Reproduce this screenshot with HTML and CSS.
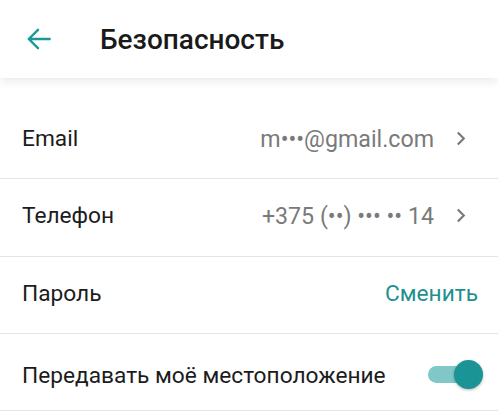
FILE: index.html
```html
<!DOCTYPE html>
<html lang="ru">
<head>
<meta charset="utf-8">
<link rel="stylesheet" href="styles.css">
</head>
<body>
<header class="appbar">
  <span class="back">
    <svg width="34" height="34" viewBox="0 0 24 24"><path d="M19.5 12H4.8M11.3 5.5L4.8 12l6.5 6.5" fill="none" stroke="#1b9898" stroke-width="1.7" stroke-linecap="round" stroke-linejoin="round"/></svg>
  </span>
  <h1 class="title">Безопасность</h1>
</header>
<main class="list">
  <div class="row">
    <span class="label">Email</span>
    <span class="value">m•••@gmail.com</span>
    <svg class="chev" width="10" height="15" viewBox="0 0 10 15"><path d="M1.8 1.5L7.8 7.5 1.8 13.5" fill="none" stroke="#777" stroke-width="2.1"/></svg>
  </div>
  <div class="row">
    <span class="label">Телефон</span>
    <span class="value">+375 (••) ••• •• 14</span>
    <svg class="chev" width="10" height="15" viewBox="0 0 10 15"><path d="M1.8 1.5L7.8 7.5 1.8 13.5" fill="none" stroke="#777" stroke-width="2.1"/></svg>
  </div>
  <div class="row">
    <span class="label">Пароль</span>
    <span class="action">Сменить</span>
  </div>
  <div class="row row-switch">
    <span class="label">Передавать моё местоположение</span>
    <span class="switch"><span class="track"></span><span class="thumb"></span></span>
  </div>
</main>
</body>
</html>
```
FILE: styles.css
```css
* { box-sizing: border-box; }
html, body { margin: 0; padding: 0; background: #fff; }
body { font-family: Roboto, "Noto Sans", sans-serif; color: #1c1c1c; width: 498px; overflow: hidden; }
.appbar {
  height: 78px;
  display: flex;
  align-items: center;
  background: #fff;
  box-shadow: 0 3px 10px rgba(0,0,0,0.09);
  position: relative;
  z-index: 1;
}
.back { width: 34px; height: 34px; margin-left: 22px; display: flex; }
.title { margin: 0 0 0 44px; font-size: 28px; font-weight: 500; color: #1a1a1a; }
.list { padding-top: 24px; }
.row {
  height: 77.3px;
  display: flex;
  align-items: center;
  padding: 0 20px 3px 22px;
  border-bottom: 1.5px solid #e4e4e4;
}
.row-switch { padding-top: 6px; padding-bottom: 0; }
.label { font-size: 22.7px; flex: 1; color: #1c1c1c; }
.value { font-size: 23.2px; color: #7a7a7a; margin-right: 22px; }
.chev { margin-right: 12px; }
.action { font-size: 22.7px; color: #1f8f8f; }
.switch { position: relative; width: 56px; height: 30px; margin-right: -5px; }
.track { position: absolute; left: 1px; top: 6px; width: 40px; height: 17px; border-radius: 9px; background: #80c7c7; }
.thumb { position: absolute; right: 0; top: 0; width: 29px; height: 29px; border-radius: 50%; background: #1a9494; box-shadow: 0 1px 3px rgba(0,0,0,0.3); }
```
